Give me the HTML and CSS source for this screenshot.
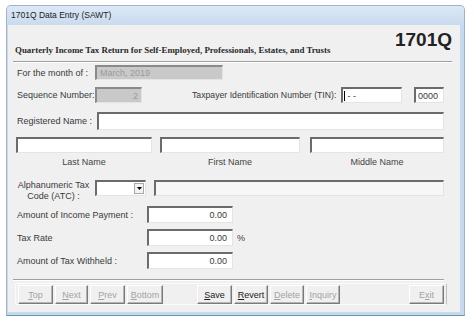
FILE: index.html
```html
<!DOCTYPE html>
<html lang="en">
<head>
    <meta charset="UTF-8">
    <title>1701Q Data Entry (SAWT)</title>
    <link rel="stylesheet" href="styles.css">
</head>
<body>
    <div class="window">
        <div class="titlebar">1701Q Data Entry (SAWT)</div>
        <div class="frame">
            <div class="head">
                <span class="form-title">Quarterly Income Tax Return for Self-Employed, Professionals, Estates, and Trusts</span>
                <span class="form-no">1701Q</span>
            </div>
            <div class="rule head-rule"></div>

            <div class="fields">
                <div class="row row-month">
                    <label class="lbl w78">For the month of :</label>
                    <div class="tb off month">March, 2019</div>
                </div>

                <div class="row row-seq">
                    <label class="lbl w78">Sequence Number:</label>
                    <div class="tb off seq">2</div>
                    <label class="lbl tin-lbl">Taxpayer Identification Number (TIN):</label>
                    <div class="tb tin"><span class="caret"></span>&nbsp;- -</div>
                    <div class="tb branch">0000</div>
                </div>

                <div class="row row-reg">
                    <label class="lbl w80">Registered Name :</label>
                    <div class="tb reg"></div>
                </div>

                <div class="row row-names">
                    <div class="tb last"></div>
                    <div class="tb first"></div>
                    <div class="tb middle"></div>
                </div>
                <div class="row name-lbls">
                    <span class="last">Last Name</span>
                    <span class="first">First Name</span>
                    <span class="middle">Middle Name</span>
                </div>

                <div class="row row-atc">
                    <label class="lbl atc-lbl">Alphanumeric Tax<br>Code (ATC) :</label>
                    <div class="tb combo">
                        <span class="drop">
                            <svg width="5" height="3" viewBox="0 0 5 3"><path d="M0 0h5L2.5 3z" fill="#000"/></svg>
                        </span>
                    </div>
                    <div class="tb atc-desc"></div>
                </div>

                <div class="row row-amt">
                    <label class="lbl w130">Amount of Income Payment :</label>
                    <div class="tb num">0.00</div>
                </div>
                <div class="row row-amt">
                    <label class="lbl w130">Tax Rate</label>
                    <div class="tb num">0.00</div>
                    <span class="pct">%</span>
                </div>
                <div class="row row-amt">
                    <label class="lbl w130">Amount of Tax Withheld :</label>
                    <div class="tb num">0.00</div>
                </div>
            </div>

            <div class="rule foot-rule"></div>

            <div class="buttons">
                <button class="btn" disabled><u>T</u>op</button>
                <button class="btn w33" disabled><u>N</u>ext</button>
                <button class="btn" disabled><u>P</u>rev</button>
                <button class="btn w36" disabled><u>B</u>ottom</button>
                <button class="btn gap-l"><u>S</u>ave</button>
                <button class="btn w34"><u>R</u>evert</button>
                <button class="btn w34" disabled><u>D</u>elete</button>
                <button class="btn w34" disabled><u>I</u>nquiry</button>
                <button class="btn exit" disabled>E<u>x</u>it</button>
            </div>
        </div>
    </div>
</body>
</html>
```

FILE: styles.css
```css
body {
    margin: 0;
    background-color: #ffffff;
    font-family: "Liberation Sans", Arial, sans-serif;
    font-size: 9px;
    color: #3a3a3a;
}
.window {
    margin: 5px 0 0 6px;
    width: 459px;
    height: 311px;
    box-sizing: border-box;
    border: 1px solid #9fb3c8;
    border-bottom-color: #5f9ea8;
    border-radius: 5px 5px 0 0;
    background-color: #c6d9ee;
    display: flex;
    flex-direction: column;
}
.titlebar {
    height: 19px;
    line-height: 19px;
    padding-left: 4px;
    font-size: 8.5px;
    color: #1e1e1e;
    background: linear-gradient(#dce8f6, #c9dbef);
    border-radius: 4px 4px 0 0;
}
.frame {
    flex: 1;
    margin: 0 4px 3px 1px;
    background-color: #f0f0f0;
    display: flex;
    flex-direction: column;
}
.head {
    height: 36px;
    box-sizing: border-box;
    display: flex;
    justify-content: space-between;
    align-items: flex-end;
    padding: 0 8px 5px 7px;
}
.form-title {
    font-family: "Liberation Serif", "Times New Roman", serif;
    font-size: 8.9px;
    font-weight: bold;
    color: #2a2a2a;
    line-height: 12px;
}
.form-no {
    font-size: 19px;
    font-weight: bold;
    color: #222;
    line-height: 20px;
    margin-bottom: 6px;
}
.rule {
    height: 1px;
    background-color: #a0a0a0;
    border-bottom: 1px solid #ffffff;
}
.head-rule {
    margin: 0 8px 0 5px;
}
.fields {
    padding: 0 16px 0 9px;
}
.row {
    display: flex;
    align-items: center;
}
.lbl {
    flex: none;
    white-space: nowrap;
}
.w78 { width: 78px; }
.w80 { width: 80px; }
.w130 { width: 130px; }
.tb {
    box-sizing: border-box;
    height: 100%;
    background-color: #ffffff;
    border-top: 2px solid #6b6b6b;
    border-left: 2px solid #6b6b6b;
    border-right: 1px solid #e4e4e4;
    border-bottom: 1px solid #e4e4e4;
    padding: 0 3px;
    display: flex;
    align-items: center;
    white-space: nowrap;
}
.tb.off {
    background-color: #c9c9c9;
    border-top-color: #8a8a8a;
    border-left-color: #8a8a8a;
    color: #9a9a9a;
}
.row-month {
    height: 15px;
    margin-top: 2px;
}
.month { width: 128px; }
.row-seq {
    height: 16px;
    margin-top: 7px;
}
.seq {
    width: 47px;
    justify-content: flex-end;
}
.tin-lbl {
    margin-left: 50px;
    width: 149px;
    font-size: 8.7px;
}
.tin {
    width: 61px;
    padding-left: 1px;
}
.caret {
    width: 1px;
    height: 10px;
    background-color: #000;
}
.branch {
    width: 30px;
    margin-left: 12px;
    padding-left: 2px;
}
.row-reg {
    height: 18px;
    margin-top: 9px;
}
.reg { flex: 1; }
.row-names {
    height: 16px;
    margin-top: 7px;
    margin-left: -1px;
}
.row-names .last { width: 136px; }
.row-names .first { width: 140px; margin-left: 8px; }
.row-names .middle { width: 134px; margin-left: 10px; }
.name-lbls {
    margin-top: 3px;
    margin-left: -1px;
    height: 12px;
    color: #444;
}
.name-lbls span {
    text-align: center;
}
.name-lbls .last { width: 136px; }
.name-lbls .first { width: 140px; margin-left: 8px; }
.name-lbls .middle { width: 134px; margin-left: 10px; }
.row-atc {
    height: 22px;
    margin-top: 12px;
    align-items: flex-start;
}
.atc-lbl {
    width: 73px;
    text-align: center;
    line-height: 11px;
}
.combo {
    height: 16px;
    width: 51px;
    margin-left: 5px;
    justify-content: flex-end;
    padding-right: 1px;
}
.drop {
    width: 10px;
    height: 11px;
    box-sizing: border-box;
    border: 1px solid #a8a8a8;
    background-color: #f3f3f3;
    display: flex;
    align-items: center;
    justify-content: center;
}
.atc-desc {
    height: 16px;
    flex: 1;
    margin-left: 8px;
    background-color: #f7f7f7;
}
.row-amt {
    height: 17px;
    margin-top: 6px;
}
.row-atc + .row-amt {
    margin-top: 4px;
}
.num {
    width: 86px;
    justify-content: flex-end;
    padding-right: 5px;
}
.pct {
    margin-left: 4px;
}
.foot-rule {
    margin: 10px 16px 0 5px;
}
.buttons {
    margin: 2px 13px 0 7px;
    height: 22px;
    box-sizing: border-box;
    border: 1px solid #fbfbfb;
    border-right-color: #c0c0c0;
    padding: 1px 0 0 2px;
    display: flex;
    align-items: flex-start;
}
.btn {
    width: 35px;
    height: 19px;
    margin-right: 2px;
    padding: 0;
    font-family: "Liberation Sans", Arial, sans-serif;
    font-size: 9px;
    color: #1a1a1a;
    background-color: #f0f0f0;
    border: 1px solid;
    border-color: #ffffff #7a7a7a #7a7a7a #ffffff;
    box-shadow: inset -1px -1px 0 #b4b4b4;
}
.btn:disabled {
    color: #a3a3a3;
}
.w33 { width: 33px; }
.w34 { width: 34px; }
.w36 { width: 36px; }
.gap-l { margin-left: 32px; }
.exit { margin-left: auto; }
```
